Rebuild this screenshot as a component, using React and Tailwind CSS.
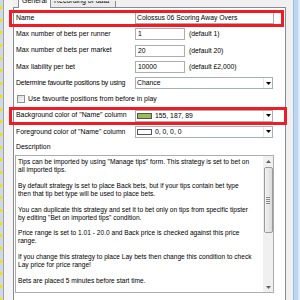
import React from "react";

const Arrow = () => (
  <svg width="5" height="3" viewBox="0 0 5 3" className="block">
    <path d="M0 0H5L2.5 3Z" fill="#000" />
  </svg>
);

function Select({ children }) {
  return (
    <div className="flex h-[12px] w-[138px] border border-[#a9aeb6] bg-white">
      <div className="flex-1 flex items-center pl-[1px] overflow-hidden whitespace-nowrap text-[6.8px]">
        {children}
      </div>
      <div className="w-[9px] border-l border-[#e6e6e6] flex items-center justify-center">
        <Arrow />
      </div>
    </div>
  );
}

function Row({ label, tight, children }) {
  return (
    <div className="flex items-center h-[16.25px] shrink-0">
      <div
        className={
          tight
            ? "w-[120px] pl-[1px] text-[6.9px] tracking-[-0.2px] whitespace-nowrap overflow-hidden"
            : "w-[120px] pl-[1px] text-[6.9px] whitespace-nowrap overflow-hidden"
        }
      >
        {label}
      </div>
      {children}
    </div>
  );
}

function NumRow({ label, value, def }) {
  return (
    <Row label={label}>
      <div className="w-[50px] h-[12px] border border-[#abadb3] bg-white flex items-center pl-[2px] text-[6.8px]">
        {value}
      </div>
      <div className="ml-[4px] text-[6.8px] whitespace-nowrap">{def}</div>
    </Row>
  );
}

const lines = [
  'Tips can be imported by using "Manage tips" form. This strategy is set to bet on',
  "all imported tips.",
  "",
  "By default strategy is set to place Back bets, but if your tips contain bet type",
  "then that tip bet type will be used to place bets.",
  "",
  "You can duplicate this strategy and set it to bet only on tips from specific tipster",
  'by editing "Bet on imported tips" condition.',
  "",
  "Price range is set to 1.01 - 20.0 and Back price is checked against this price",
  "range.",
  "",
  "If you change this strategy to place Lay bets then change this condition to check",
  "Lay price for price range!",
  "",
  "Bets are placed 5 minutes before start time.",
];

const marks = Array.from({ length: 24 }, (_, i) => i);

export default function App() {
  return (
    <div className="relative w-[300px] h-[300px] overflow-hidden bg-[#f0f0f0] flex font-['Liberation_Sans',Arial,sans-serif] text-black">
      {/* left strip */}
      <div className="w-[13px] h-full flex shrink-0">
        <div className="w-[3px] h-full bg-[#cfd9e6] flex flex-col gap-[9.7px] pt-[6px]">
          {marks.map((i) => (
            <div key={i} className="w-[2px] h-[3px] bg-[#f3e200] shrink-0" />
          ))}
        </div>
        <div className="w-px h-full bg-[#a3a3a3]" />
        <div className="flex-1 h-full bg-[#f4f4f4]" />
      </div>

      {/* tab control */}
      <div className="w-[273px] h-full flex flex-col shrink-0">
        <div className="h-[8px] flex items-end shrink-0">
          <div className="w-[5px] h-full border-b border-[#898c95]" />
          <div className="w-[33px] h-[8px] bg-white border-x border-[#898c95] overflow-hidden">
            <div className="mt-[-3.5px] leading-[8px] text-[7px] pl-[3px] whitespace-nowrap">General</div>
          </div>
          <div className="w-[65px] h-[7px] bg-[#ebebeb] border-r border-b border-[#898c95] overflow-hidden">
            <div className="mt-[-4.5px] leading-[8px] text-[7px] pl-[3px] whitespace-nowrap">Recording of data</div>
          </div>
          <div className="flex-1 h-full border-b border-[#898c95]" />
        </div>
        <div className="flex-1 bg-white border-x border-[#898c95] flex flex-col pl-[1px] pt-[2px]">
          <Row label="Name">
            <div className="w-[139px] h-[12px] border border-[#abadb3] bg-white flex items-center pl-[1px] text-[6.8px] whitespace-nowrap">
              Colossus 06 Scoring Away Overs
            </div>
          </Row>
          <NumRow label="Max number of bets per runner" value="1" def="(default 1)" />
          <NumRow label="Max number of bets per market" value="20" def="(default 20)" />
          <NumRow label="Max liability per bet" value="10000" def="(default £2,000)" />
          <Row label="Determine favourite positions by using" tight>
            <Select>Chance</Select>
          </Row>
          <div className="flex items-center h-[16.25px] shrink-0 pl-[2px]">
            <div className="w-[8px] h-[8px] border border-[#8e8f8f] bg-gradient-to-br from-[#dcdcdc] to-[#f8f8f8]" />
            <div className="ml-[3px] text-[6.9px] whitespace-nowrap">Use favourite positions from before in play</div>
          </div>
          <Row label='Background color of "Name" column'>
            <Select>
              <div className="w-[15px] h-[6px] bg-[#9bbb59] border border-[#555]" />
              <span className="ml-[3px]">155, 187, 89</span>
            </Select>
          </Row>
          <Row label='Foreground color of "Name" column'>
            <Select>
              <div className="w-[15px] h-[6px] bg-white border border-[#555]" />
              <span className="ml-[3px]">0, 0, 0, 0</span>
            </Select>
          </Row>
          <div className="h-[15px] flex items-center pl-[1px] text-[6.9px] shrink-0">Description</div>
          <div className="w-[259px] h-[138px] border border-[#abadb3] flex shrink-0">
            <div className="flex-1 pl-[2px] pt-[2px] text-[6.6px] leading-[7.95px] overflow-hidden">
              {lines.map((l, i) => (
                <div key={i} className="h-[7.95px] whitespace-pre">{l}</div>
              ))}
            </div>
            <div className="w-[10px] h-full bg-[#f0f0f0] flex flex-col items-center">
              <div className="h-[10px] w-full flex items-center justify-center">
                <svg width="5" height="3" viewBox="0 0 5 3"><path d="M0 3H5L2.5 0Z" fill="#606060" /></svg>
              </div>
              <div className="mt-[1px] h-[66px] w-[9px] rounded-[2px] border border-[#9a9a9a] bg-gradient-to-r from-[#f2f2f2] to-[#dadada] flex flex-col items-center justify-center gap-[1px]">
                <div className="w-[4px] h-px bg-[#8a8a8a]" />
                <div className="w-[4px] h-px bg-[#8a8a8a]" />
                <div className="w-[4px] h-px bg-[#8a8a8a]" />
                <div className="w-[4px] h-px bg-[#8a8a8a]" />
              </div>
              <div className="flex-1" />
              <div className="h-[10px] w-full flex items-center justify-center">
                <svg width="5" height="3" viewBox="0 0 5 3"><path d="M0 0H5L2.5 3Z" fill="#606060" /></svg>
              </div>
            </div>
          </div>
        </div>
      </div>

      {/* right side */}
      <div className="w-[7px] h-full bg-[#f0f0f0] shrink-0" />
      <div className="w-px h-full bg-[#9fc0e3] shrink-0" />
      <div className="w-[4px] h-full bg-[#bcd6f0] shrink-0" />
      <div className="w-[2px] h-full bg-[#dde9f5] shrink-0" />

      {/* red annotation boxes */}
      <div className="absolute left-[9px] top-[10px] w-[275px] h-[17px] border-[3px] border-[#ee1c25] pointer-events-none" />
      <div className="absolute left-[9px] top-[107px] w-[278px] h-[18px] border-[3px] border-[#ee1c25] pointer-events-none" />
    </div>
  );
}
